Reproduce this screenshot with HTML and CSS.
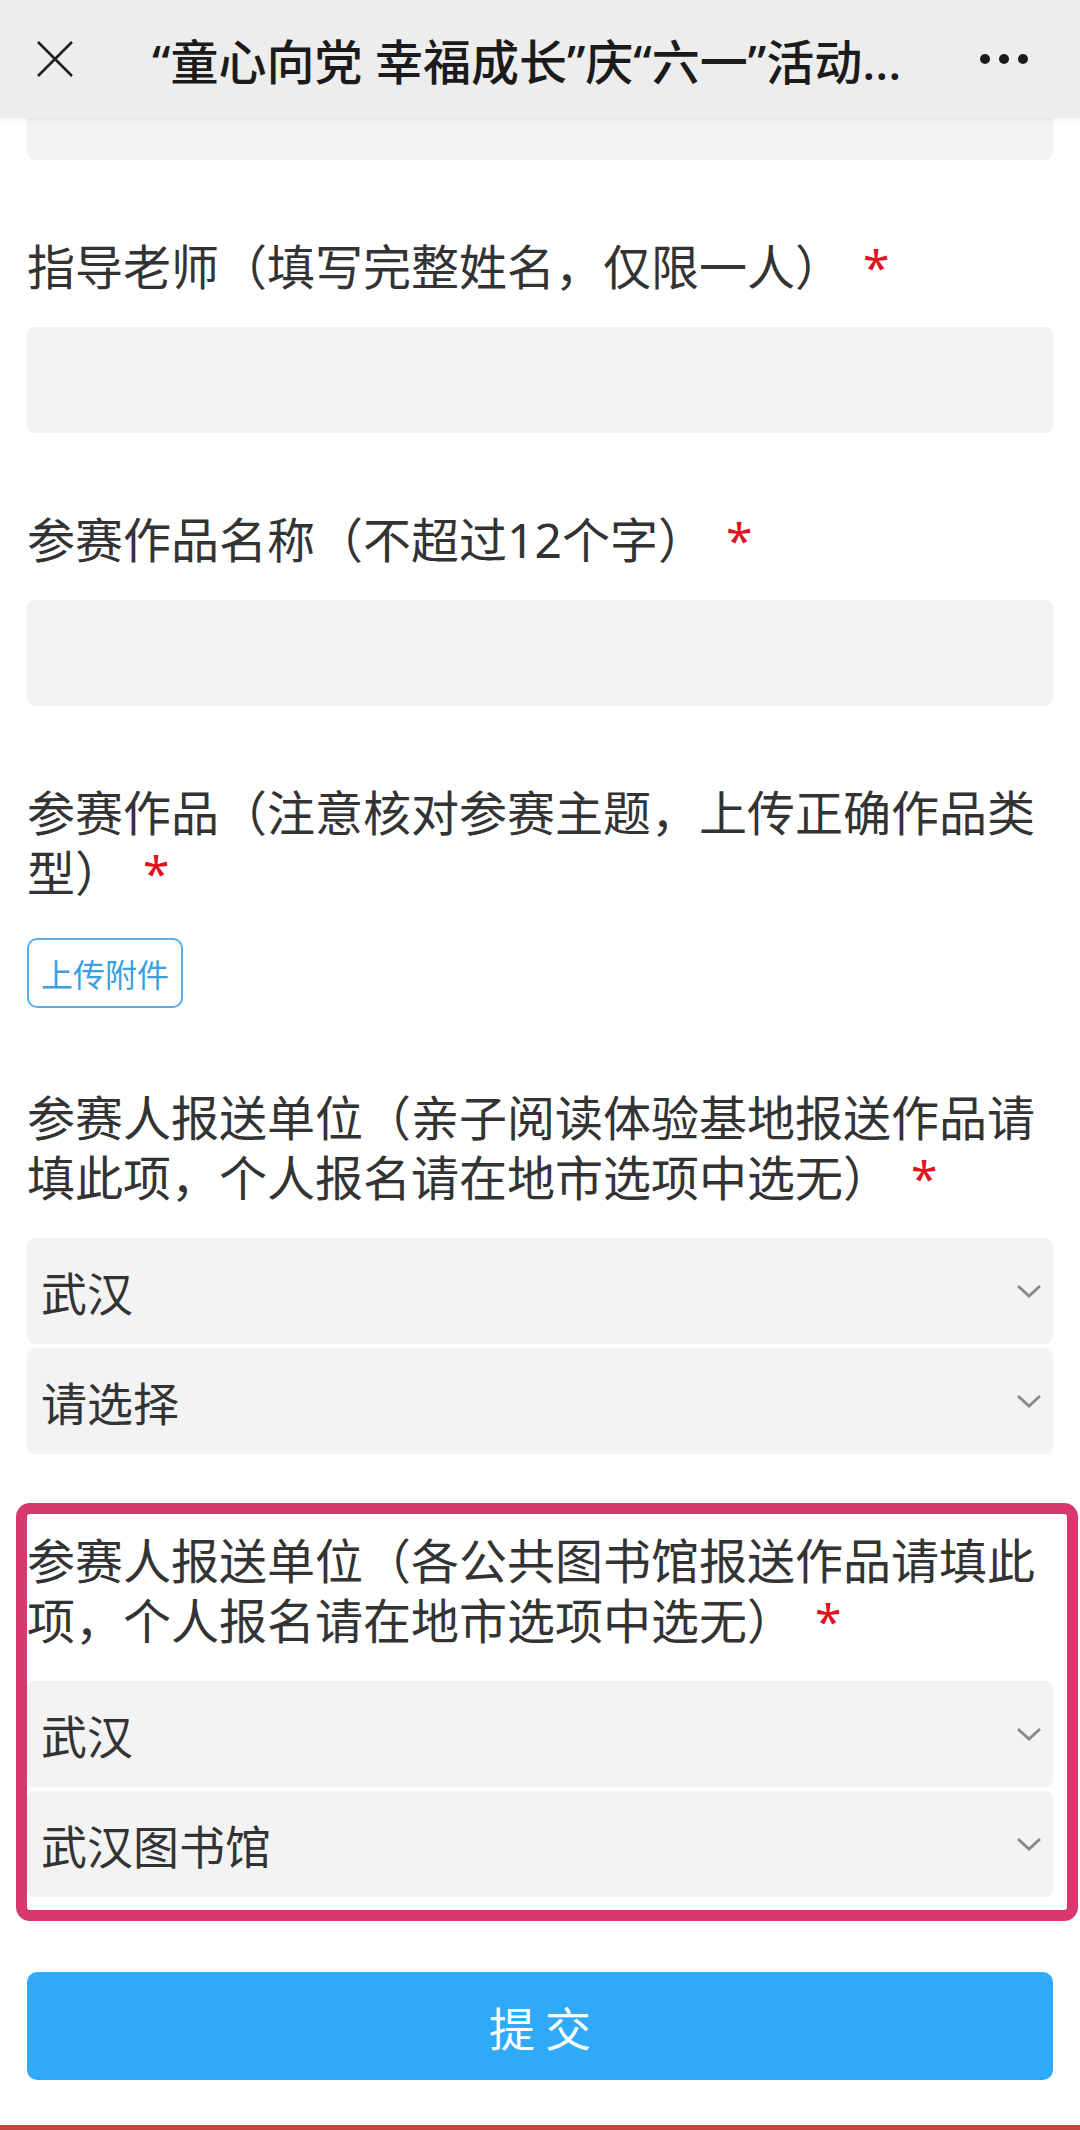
FILE: index.html
```html
<!DOCTYPE html>
<html lang="zh-CN">
<head>
<meta charset="utf-8">
<title>报名表</title>
<link rel="stylesheet" href="styles.css">
</head>
<body>
<header class="topbar">
  <svg class="close" width="38" height="38" viewBox="0 0 38 38" aria-hidden="true">
    <path d="M2 2 L36 36 M36 2 L2 36" stroke="#1f1f1f" stroke-width="2.6" fill="none"/>
  </svg>
  <div class="title">“童心向党 幸福成长”庆“六一”活动...</div>
  <div class="more"><span></span><span></span><span></span></div>
</header>

<main class="form">
  <div class="input cut"></div>

  <section class="field">
    <div class="label">指导老师（填写完整姓名，仅限一人）<span class="req">*</span></div>
    <div class="input"></div>
  </section>

  <section class="field">
    <div class="label">参赛作品名称（不超过12个字）<span class="req">*</span></div>
    <div class="input"></div>
  </section>

  <section class="field upload-field">
    <div class="label">参赛作品（注意核对参赛主题，上传正确作品类型）<span class="req">*</span></div>
    <div class="upload">上传附件</div>
  </section>

  <section class="field after-upload">
    <div class="label">参赛人报送单位（亲子阅读体验基地报送作品请填此项，个人报名请在地市选项中选无）<span class="req">*</span></div>
    <div class="selects">
      <div class="select"><span>武汉</span><svg width="26" height="14" viewBox="0 0 26 14"><path d="M2 2 L13 12 L24 2" stroke="#888888" stroke-width="2.8" fill="none"/></svg></div>
      <div class="select"><span>请选择</span><svg width="26" height="14" viewBox="0 0 26 14"><path d="M2 2 L13 12 L24 2" stroke="#888888" stroke-width="2.8" fill="none"/></svg></div>
    </div>
  </section>

  <section class="field highlighted">
    <div class="label">参赛人报送单位（各公共图书馆报送作品请填此项，个人报名请在地市选项中选无）<span class="req">*</span></div>
    <div class="selects">
      <div class="select"><span>武汉</span><svg width="26" height="14" viewBox="0 0 26 14"><path d="M2 2 L13 12 L24 2" stroke="#888888" stroke-width="2.8" fill="none"/></svg></div>
      <div class="select"><span>武汉图书馆</span><svg width="26" height="14" viewBox="0 0 26 14"><path d="M2 2 L13 12 L24 2" stroke="#888888" stroke-width="2.8" fill="none"/></svg></div>
    </div>
    <div class="mark"></div>
  </section>

  <div class="submit">提交</div>
</main>
<div class="strip"></div>
</body>
</html>
```

FILE: styles.css
```css
* { box-sizing: border-box; }

html, body {
  margin: 0;
  padding: 0;
  background: #ffffff;
}

body {
  width: 1080px;
  height: 2130px;
  overflow: hidden;
  font-family: "Noto Sans", "Noto Sans CJK SC", sans-serif;
  color: #333333;
  display: flex;
  flex-direction: column;
}

.topbar {
  height: 118px;
  flex: none;
  background: #ededed;
  display: flex;
  align-items: center;
  padding: 0 52px 0 36px;
  box-shadow: 0 3px 6px rgba(0, 0, 0, 0.05);
  position: relative;
  z-index: 2;
}

.close {
  flex: none;
  display: block;
}

.title {
  flex: 1;
  margin-left: 78px;
  font-size: 48px;
  font-weight: 500;
  color: #1b1b1b;
  white-space: nowrap;
}

.more {
  flex: none;
  display: flex;
  gap: 9px;
  margin-left: 20px;
}

.more span {
  width: 10px;
  height: 10px;
  border-radius: 50%;
  background: #1b1b1b;
}

.form {
  flex: 1;
  padding: 0 27px;
  display: flex;
  flex-direction: column;
}

.input {
  height: 106px;
  background: #f3f3f3;
  border-radius: 8px;
}

.input.cut {
  height: 42px;
  border-radius: 0 0 8px 8px;
}

.field {
  margin-top: 77px;
  display: flex;
  flex-direction: column;
  position: relative;
}

.after-upload {
  margin-top: 80px;
}

.label {
  font-size: 48px;
  line-height: 60px;
  color: #333333;
  margin-bottom: 30px;
}

.req {
  color: #e0141e;
  margin-left: 20px;
}

.upload {
  align-self: flex-start;
  margin-top: 5px;
  height: 70px;
  padding: 0 12px;
  border: 2px solid #5aaee6;
  border-radius: 10px;
  color: #3d9fe0;
  font-size: 32px;
  display: flex;
  align-items: center;
}

.selects {
  display: flex;
  flex-direction: column;
  gap: 4px;
}

.select {
  height: 106px;
  background: #f3f3f3;
  border-radius: 8px;
  display: flex;
  align-items: center;
  justify-content: space-between;
  padding: 0 11px 0 14px;
  font-size: 46px;
  color: #333333;
}

.select svg {
  display: block;
  flex: none;
}

.mark {
  position: absolute;
  top: -28px;
  left: -11px;
  right: -25px;
  bottom: -24px;
  border: 11px solid #d8376f;
  border-radius: 14px;
  pointer-events: none;
}

.submit {
  margin-top: 75px;
  height: 108px;
  background: #2eaaf8;
  border-radius: 10px;
  color: #ffffff;
  font-size: 46px;
  letter-spacing: 10px;
  padding-left: 10px;
  display: flex;
  align-items: center;
  justify-content: center;
}

.strip {
  height: 5px;
  flex: none;
  background: #c2483f;
}
```
